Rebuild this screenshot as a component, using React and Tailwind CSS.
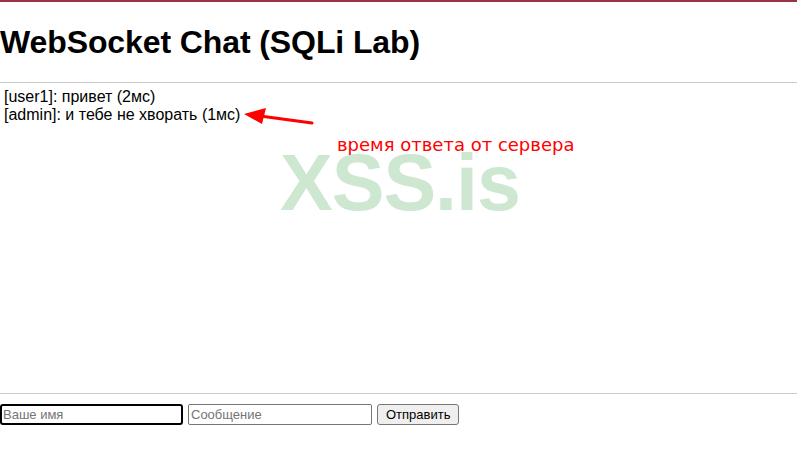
export default function App() {
  return (
    <div className="relative w-[797px] h-[450px] bg-white overflow-hidden" style={{ fontFamily: '"Liberation Sans", Arial, sans-serif' }}>
      <div className="h-[2px] bg-[#9b3347]" />
      <h1 className="m-0 pl-0 pt-[22px] pb-[21px] text-[32px] leading-[37px] font-bold text-black tracking-[-0.1px]">WebSocket Chat (SQLi Lab)</h1>
      <div className="border-t border-b border-[#cccccc] h-[312px] pl-[4px] pt-[5px] text-[16px] leading-[18px] text-black">
        <div>[user1]: привет (2мс)</div>
        <div>[admin]: и тебе не хворать (1мс)</div>
      </div>
      <div className="flex items-center gap-[5px] pt-[10px] pl-0">
        <input placeholder="Ваше имя" className="w-[183px] h-[21px] border-2 border-black rounded-[3px] px-[1px] text-[13px] placeholder:text-[#757575] outline-none" style={{ fontFamily: '"Liberation Sans", Arial, sans-serif' }} />
        <input placeholder="Сообщение" className="w-[184px] h-[21px] border border-[#767676] rounded-[2px] px-[2px] text-[13px] placeholder:text-[#757575] outline-none" style={{ fontFamily: '"Liberation Sans", Arial, sans-serif' }} />
        <button className="h-[21px] px-[8px] border border-[#767676] rounded-[3px] bg-[#efefef] text-[13px] text-black" style={{ fontFamily: '"Liberation Sans", Arial, sans-serif' }}>Отправить</button>
      </div>
      <div className="absolute left-[280px] top-[138px] text-[79px] leading-[90px] font-bold text-[#cde7d0] tracking-[-1px]">XSS.is</div>
      <div className="absolute left-[337px] top-[134px] text-[18px] leading-[22px] text-[#ff0000]" style={{ fontFamily: '"DejaVu Sans", sans-serif' }}>время ответа от сервера</div>
      <svg className="absolute left-[240px] top-[106px]" width="80" height="24" viewBox="0 0 80 24">
        <line x1="72" y1="17" x2="20" y2="10" stroke="#ff0000" strokeWidth="3" strokeLinecap="round" />
        <polygon points="4,8 26,2 22,18" fill="#ff0000" />
      </svg>
    </div>
  );
}
